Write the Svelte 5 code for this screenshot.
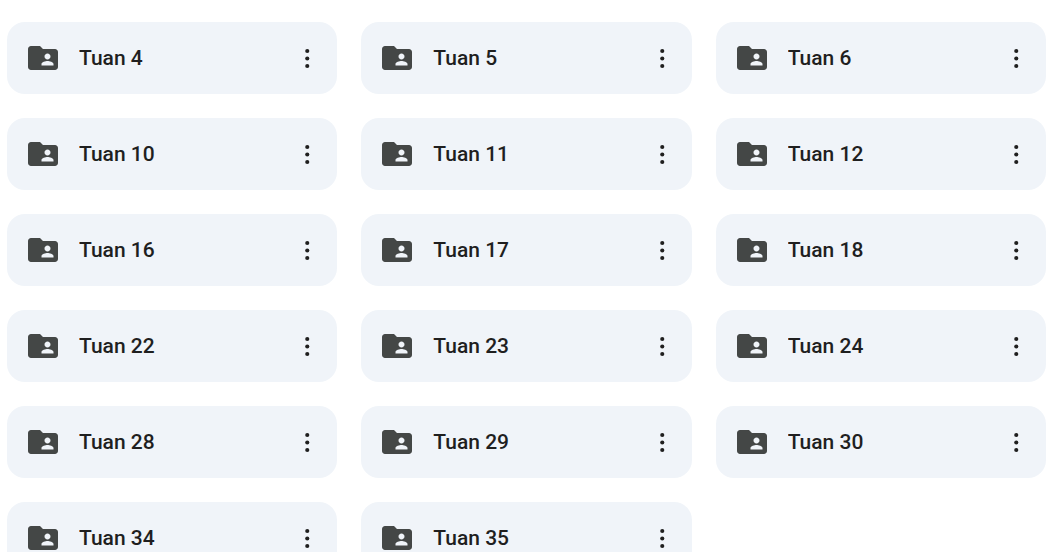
<script lang="ts">
  interface Folder {
    id: number;
    name: string;
  }

  const weeks = [4, 5, 6, 10, 11, 12, 16, 17, 18, 22, 23, 24, 28, 29, 30, 34, 35];

  const folders: Folder[] = weeks.map((week) => ({ id: week, name: `Tuan ${week}` }));
</script>

<main class="folder-view">
  <ul class="folder-grid">
    {#each folders as folder (folder.id)}
      <li class="folder-card">
        <svg class="folder-icon" viewBox="0 0 24 24" aria-hidden="true">
          <path
            d="M20 6h-8l-2-2H4c-1.1 0-1.99.9-1.99 2L2 18c0 1.1.9 2 2 2h16c1.1 0 2-.9 2-2V8c0-1.1-.9-2-2-2zm-5 3c1.1 0 2 .9 2 2s-.9 2-2 2-2-.9-2-2 .9-2 2-2zm4 8h-8v-1c0-1.33 2.67-2 4-2s4 .67 4 2v1z"
          />
        </svg>
        <span class="folder-name" title={folder.name}>{folder.name}</span>
        <button class="more-button" type="button" aria-label="More actions for {folder.name}">
          <svg class="more-icon" viewBox="0 0 24 24" aria-hidden="true">
            <circle cx="12.2" cy="6.4" r="1.65" />
            <circle cx="12.2" cy="12.4" r="1.65" />
            <circle cx="12.2" cy="18.4" r="1.65" />
          </svg>
        </button>
      </li>
    {/each}
  </ul>
</main>

<style>
  :global(body) {
    background: #fff;
  }

  .folder-view {
    padding: 22px 13px 24px 7px;
    font-family: Roboto, 'Liberation Sans', sans-serif;
    color: #1f1f1f;
  }

  .folder-grid {
    display: grid;
    grid-template-columns: repeat(3, minmax(0, 1fr));
    gap: 24px;
    margin: 0;
    padding: 0;
    list-style: none;
  }

  .folder-card {
    display: flex;
    align-items: center;
    gap: 18px;
    box-sizing: border-box;
    min-height: 72px;
    padding: 0 12px 0 18px;
    border-radius: 18px;
    background: #f0f4f9;
  }

  .folder-icon {
    flex: none;
    width: 36px;
    height: 36px;
    fill: #444746;
  }

  .folder-name {
    flex: 1;
    min-width: 0;
    font-size: 21px;
    font-weight: 500;
    line-height: 30px;
    white-space: nowrap;
    overflow: hidden;
    text-overflow: ellipsis;
  }

  .more-button {
    display: flex;
    flex: none;
    align-items: center;
    justify-content: center;
    width: 36px;
    height: 36px;
    padding: 0;
    border: 0;
    border-radius: 50%;
    background: transparent;
    cursor: pointer;
  }

  .more-button:hover {
    background: #e1e5ea;
  }

  .more-icon {
    width: 30px;
    height: 30px;
    fill: #1f1f1f;
  }
</style>
